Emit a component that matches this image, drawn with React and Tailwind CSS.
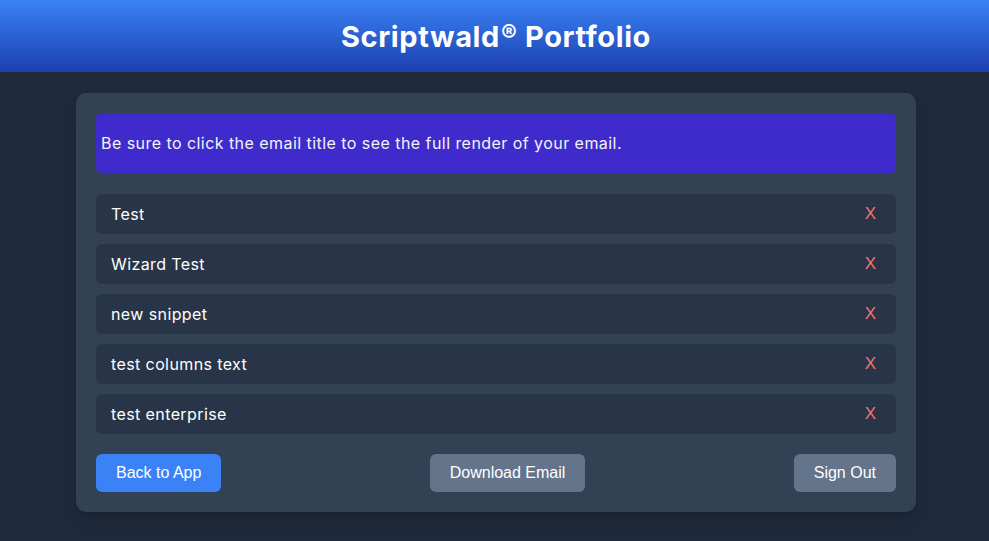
export default function App() {
  const emails = ['Test', 'Wizard Test', 'new snippet', 'test columns text', 'test enterprise'];

  return (
    <div className="min-h-screen bg-[#1e293b] pl-[3px] font-['Inter',sans-serif]">
      <header className="-ml-[3px] pl-[3px] h-[72px] bg-gradient-to-b from-[#3b82f6] to-[#1e40af] flex items-center justify-center">
        <h1 className="text-[29px] font-bold text-white tracking-[0.6px] pt-[1px]">
          Scriptwald<sup className="text-[24px] relative -top-[5px] ml-[1px]">®</sup> Portfolio
        </h1>
      </header>

      <main className="pt-[21px] pb-8">
        <div className="w-[840px] mx-auto bg-[#334155] rounded-[10px] p-5 shadow-lg">
          <div className="h-[60px] bg-[#3f2bcc] rounded-md flex items-center px-[5px] text-[16px] text-gray-100 tracking-[0.45px]">
            Be sure to click the email title to see the full render of your email.
          </div>

          <ul className="mt-[21px] flex flex-col gap-[10px]">
            {emails.map((email) => (
              <li key={email} className="h-10 bg-[#283548] rounded-md flex items-center justify-between pl-[15px] pr-5">
                <span className="text-white text-[16px] tracking-[0.4px] cursor-pointer">{email}</span>
                <button className="text-[#f87171] text-[17px] font-['Liberation_Sans',sans-serif]">X</button>
              </li>
            ))}
          </ul>

          <div className="mt-5 flex items-center justify-between font-['Liberation_Sans',sans-serif] text-[16px] text-white">
            <button className="h-[38px] px-5 bg-[#3b82f6] rounded-md">Back to App</button>
            <button className="h-[38px] px-5 bg-[#64748b] rounded-md">Download Email</button>
            <button className="h-[38px] px-5 bg-[#64748b] rounded-md">Sign Out</button>
          </div>
        </div>
      </main>
    </div>
  );
}
